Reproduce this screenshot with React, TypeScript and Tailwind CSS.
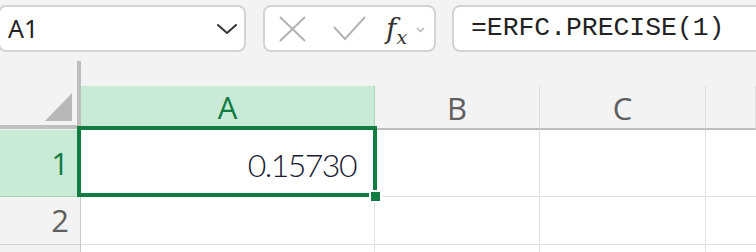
import React from "react";

const ColHeader = ({ label, w, active }: { label: string; w?: string; active?: boolean }) => (
  <div
    className={
      active
        ? "w-[294px] h-full flex items-center justify-center bg-[#caead8] border-r border-r-[#a3d9b8] border-b-4 border-b-[#107c41] text-[#107c41]"
        : `${w ?? "flex-1"} h-full flex items-center justify-center border-r border-r-[#dedede] border-b-2 border-b-[#bdbdbd] text-[#5f5f5f]`
    }
  >
    <span className="text-[31px] leading-none pt-[2px]">{label}</span>
  </div>
);

const Row = ({ n, h, active, children }: { n: string; h: string; active?: boolean; children?: React.ReactNode }) => (
  <div className={`flex ${h}`}>
    <div
      className={
        active
          ? "w-[81px] shrink-0 flex items-center justify-end pr-[12px] bg-[#caead8] border-b border-b-[#a3d9b8] text-[#107c41]"
          : "w-[81px] shrink-0 flex items-center justify-end pr-[11px] bg-[#f3f3f3] border-r border-r-[#c8c8c8] border-b border-b-[#d6d6d6] text-[#5f5f5f]"
      }
    >
      <span className="text-[31px] leading-none">{n}</span>
    </div>
    <div className="w-[294px] shrink-0 border-r border-b border-[#e1e1e1] flex items-center justify-end pr-[18px]">
      {children}
    </div>
    <div className="w-[165px] shrink-0 border-r border-b border-[#e1e1e1]" />
    <div className="w-[166px] shrink-0 border-r border-b border-[#e1e1e1]" />
    <div className="flex-1 border-b border-[#e1e1e1]" />
  </div>
);

export default function App() {
  return (
    <div className="relative w-[756px] h-[252px] overflow-hidden bg-white font-['Open_Sans',sans-serif]">
      {/* toolbar */}
      <div className="h-[61px] bg-[#f3f3f3] flex items-start pt-[5px]">
        <div className="ml-[-2px] w-[248px] h-[47px] bg-white border-2 border-[#d3d3d3] rounded-[8px] flex items-center justify-between pl-[8px] pr-[6px]">
          <span className="text-[25px] text-[#222] leading-none font-['Noto_Sans',sans-serif]">A1</span>
          <svg width="22" height="12" viewBox="0 0 22 12" fill="none">
            <path d="M2 2 L11 10 L20 2" stroke="#333" strokeWidth="2" strokeLinecap="round" strokeLinejoin="round" />
          </svg>
        </div>
        <div className="ml-[17px] w-[173px] h-[47px] bg-white border-2 border-[#d3d3d3] rounded-[8px] flex items-center pl-[13px]">
          <svg width="29" height="26" viewBox="0 0 29 26" fill="none">
            <path d="M2 1 L27 25 M27 1 L2 25" stroke="#b3b3b3" strokeWidth="2" />
          </svg>
          <svg className="ml-[26px]" width="33" height="25" viewBox="0 0 33 25" fill="none">
            <path d="M1 11 L12 23 L32 1" stroke="#b3b3b3" strokeWidth="2" />
          </svg>
          <span className="ml-[20px] flex items-end leading-none text-[#333] font-['DejaVu_Serif',serif]">
            <span className="italic text-[28px]">f</span>
            <span className="italic text-[19px] mb-[-4px]">x</span>
          </span>
          <svg className="ml-[9px] mt-[2px]" width="9" height="6" viewBox="0 0 9 6" fill="none">
            <path d="M1 1 L4.5 4.5 L8 1" stroke="#b0b0b0" strokeWidth="1.3" />
          </svg>
        </div>
        <div className="ml-[16px] flex-1 mr-[-20px] h-[47px] bg-white border-2 border-[#d3d3d3] rounded-[8px] flex items-center pl-[17px]">
          <span className="text-[26.4px] leading-none text-[#222] font-['Liberation_Mono',monospace]">=ERFC.PRECISE(1)</span>
        </div>
      </div>

      {/* column headers */}
      <div className="flex h-[69px] bg-[#f3f3f3]">
        <div className="w-[81px] shrink-0 h-[68px] relative border-r-4 border-b-4 border-[#bfbfbf]">
          <svg className="absolute left-[45px] top-[32px]" width="28" height="28" viewBox="0 0 28 28">
            <path d="M27 0 L27 28 L0 28 Z" fill="#b8b8b8" />
          </svg>
        </div>
        <div className="flex-1 flex flex-col">
          <div className="h-[25px]" />
          <div className="flex-1 flex">
            <ColHeader label="A" active />
            <ColHeader label="B" w="w-[165px]" />
            <ColHeader label="C" w="w-[166px]" />
            <ColHeader label="" />
          </div>
        </div>
      </div>

      {/* rows */}
      <Row n="1" h="h-[67px]" active>
        <span className="text-[32px] font-light leading-none tracking-[-1.5px] text-[#1a1a33] pt-[4px] font-['Lato',sans-serif]">0.15730</span>
      </Row>
      <Row n="2" h="h-[48px]" />
      <Row n="" h="h-[40px]" />

      {/* selection */}
      <div className="absolute left-[77px] top-[126px] w-[300px] h-[71px] border-4 border-[#107c41]" />
      <div className="absolute left-[369px] top-[190px] w-[13px] h-[13px] bg-white" />
      <div className="absolute left-[371px] top-[192px] w-[9px] h-[9px] bg-[#107c41]" />
    </div>
  );
}
